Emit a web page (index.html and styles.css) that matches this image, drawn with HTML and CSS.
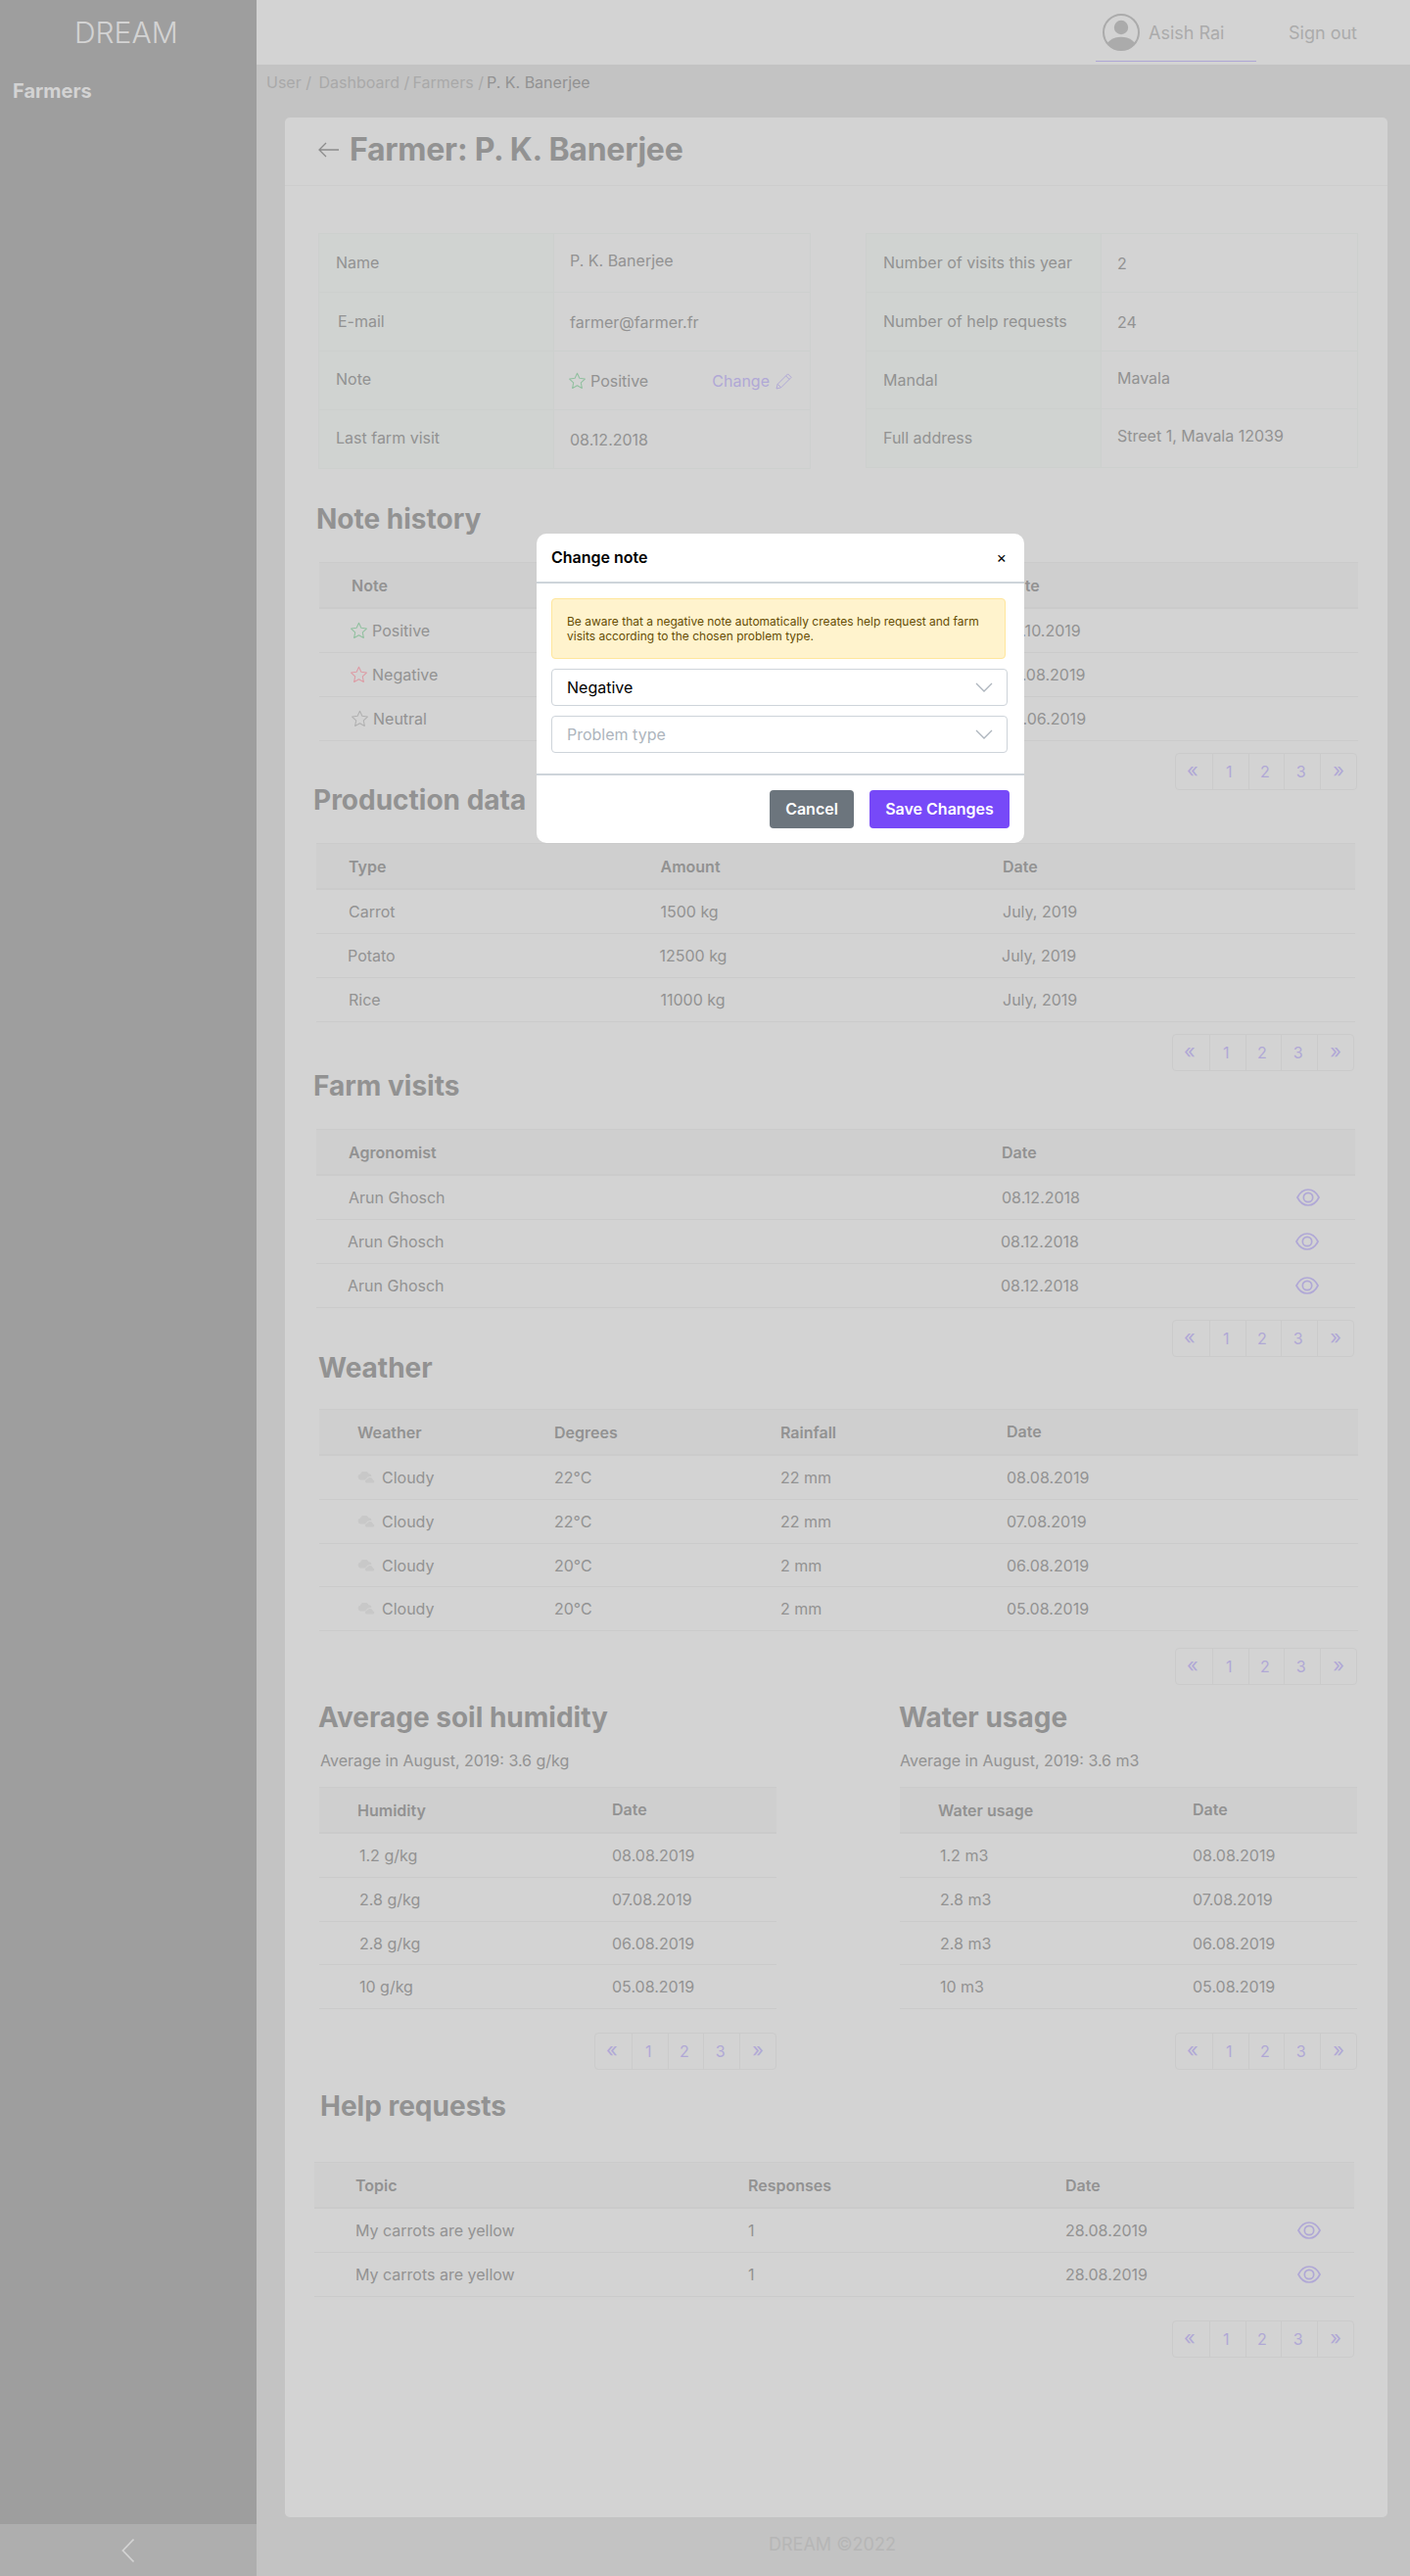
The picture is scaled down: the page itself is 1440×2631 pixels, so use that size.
FILE: index.html
```html
<!DOCTYPE html>
<html lang="en">
<head>
<meta charset="utf-8">
<title>DREAM - Farmer</title>
<link rel="stylesheet" href="styles.css">
</head>
<body>
<svg class="defs" width="0" height="0">
  <symbol id="star" viewBox="0 0 16 16"><path d="M8 .8l2.200 4.700 5.200.7-3.800 3.600.95 5.200L8 12.500 3.450 15l.95-5.200L.6 6.200l5.200-.7z" fill="none" stroke="currentColor" stroke-linejoin="round"/></symbol>
  <symbol id="eye" viewBox="0 0 24 18"><path d="M1 9C3.600 3.900 7.400 1 12 1s8.400 2.900 11 8c-2.600 5.100-6.400 8-11 8S3.600 14.100 1 9z" fill="none" stroke="currentColor" stroke-width="1.700"/><circle cx="12" cy="9" r="4.700" fill="none" stroke="currentColor" stroke-width="1.700"/></symbol>
  <symbol id="cloud" viewBox="0 0 18 12"><path d="M3.300 8.500a3.100 3.100 0 0 1-.2-6.100A4.600 4.600 0 0 1 11.600 2.300 2.900 2.900 0 0 1 14.400 5.200C12 4.700 10 5.600 9.300 7.400 8.500 7.500 8 7.900 7.600 8.500z"/><path d="M9.500 11.500a1.700 1.700 0 0 1 .3-3.400 3.300 3.300 0 0 1 6.200.4 1.550 1.550 0 0 1 .2 3z"/></symbol>
  <symbol id="down" viewBox="0 0 18 10"><path d="M1 1l8 8 8-8" fill="none" stroke="currentColor" stroke-width="1.300"/></symbol>
</svg>
<div class="app">
  <aside class="sidebar">
    <div class="brand">DREAM</div>
    <a class="side-link">Farmers</a>
    <div class="collapse"><svg width="14" height="26" viewBox="0 0 14 26"><path d="M12.500 1.500L1.500 13l11 11.500" fill="none" stroke="currentColor" stroke-width="1.800"/></svg></div>
  </aside>
  <div class="main">
    <header class="topbar">
      <div class="user">
        <svg width="38" height="38" viewBox="0 0 38 38"><defs><clipPath id="disc"><circle cx="19" cy="19" r="18"/></clipPath></defs><circle cx="19" cy="19" r="18" fill="none" stroke="#ababab" stroke-width="2"/><g clip-path="url(#disc)" fill="#ababab"><circle cx="19" cy="14" r="7.200"/><ellipse cx="19" cy="35" rx="15.500" ry="11.300"/></g></svg>
        <span>Asish Rai</span>
      </div>
      <a class="signout">Sign out</a>
    </header>
    <nav class="crumbs"><span class="c1">User /</span><span class="c2">Dashboard /</span><span class="c3">Farmers /</span><span class="here">P. K. Banerjee</span></nav>
    <main class="card">
      <div class="title">
        <svg width="21" height="16" viewBox="0 0 21 16"><path d="M21 8H1M8 1L1 8l7 7" fill="none" stroke="currentColor" stroke-width="1.300"/></svg>
        <h1>Farmer: P. K. Banerjee</h1>
      </div>
      <div class="content">
        <div class="infos">
          <div class="info">
            <div class="k">Name</div><div class="v up">P. K. Banerjee</div>
            <div class="k in">E-mail</div><div class="v down">farmer@farmer.fr</div>
            <div class="k up">Note</div><div class="v down"><svg class="star good"><use href="#star"/></svg>Positive<a class="change">Change <svg width="17" height="17" viewBox="0 0 17 17"><path d="M1 16l1.200-4.700L12.600.9l3.500 3.500L5.700 14.800zM10.600 2.900l3.500 3.500M2.200 11.300l3.500 3.500" fill="none" stroke="currentColor" stroke-linejoin="round"/></svg></a></div>
            <div class="k up">Last farm visit</div><div class="v down">08.12.2018</div>
          </div>
          <div class="info second">
            <div class="k">Number of visits this year</div><div class="v down">2</div>
            <div class="k">Number of help requests</div><div class="v down">24</div>
            <div class="k">Mandal</div><div class="v up">Mavala</div>
            <div class="k">Full address</div><div class="v up">Street 1, Mavala 12039</div>
          </div>
        </div>

        <section class="s-note">
          <h2>Note history</h2>
          <div class="table">
            <div class="row head"><span>Note</span><span class="d2">Date</span></div>
            <div class="row"><span><svg class="star good"><use href="#star"/></svg>Positive</span><span>05.10.2019</span></div>
            <div class="row"><span><svg class="star bad"><use href="#star"/></svg>Negative</span><span>08.08.2019</span></div>
            <div class="row"><span class="r1"><svg class="star"><use href="#star"/></svg>Neutral</span><span class="r1">06.06.2019</span></div>
          </div>
          <div class="pager"><a>«</a><a>1</a><a>2</a><a>3</a><a>»</a></div>
        </section>

        <section class="s-prod">
          <h2>Production data</h2>
          <div class="table">
            <div class="row head"><span>Type</span><span>Amount</span><span>Date</span></div>
            <div class="row"><span>Carrot</span><span>1500 kg</span><span>July, 2019</span></div>
            <div class="row"><span>Potato</span><span>12500 kg</span><span>July, 2019</span></div>
            <div class="row"><span>Rice</span><span>11000 kg</span><span>July, 2019</span></div>
          </div>
          <div class="pager"><a>«</a><a>1</a><a>2</a><a>3</a><a>»</a></div>
        </section>

        <section class="s-farm">
          <h2>Farm visits</h2>
          <div class="table">
            <div class="row head"><span>Agronomist</span><span>Date</span></div>
            <div class="row"><span>Arun Ghosch</span><span>08.12.2018</span><svg class="eye"><use href="#eye"/></svg></div>
            <div class="row"><span>Arun Ghosch</span><span>08.12.2018</span><svg class="eye"><use href="#eye"/></svg></div>
            <div class="row"><span>Arun Ghosch</span><span>08.12.2018</span><svg class="eye"><use href="#eye"/></svg></div>
          </div>
          <div class="pager"><a>«</a><a>1</a><a>2</a><a>3</a><a>»</a></div>
        </section>

        <section class="s-weather">
          <h2>Weather</h2>
          <div class="table">
            <div class="row head"><span>Weather</span><span>Degrees</span><span>Rainfall</span><span class="rise">Date</span></div>
            <div class="row"><span><svg class="cloud"><use href="#cloud"/></svg>Cloudy</span><span>22°C</span><span>22 mm</span><span>08.08.2019</span></div>
            <div class="row"><span><svg class="cloud"><use href="#cloud"/></svg>Cloudy</span><span>22°C</span><span>22 mm</span><span>07.08.2019</span></div>
            <div class="row short"><span><svg class="cloud"><use href="#cloud"/></svg>Cloudy</span><span>20°C</span><span>2 mm</span><span>06.08.2019</span></div>
            <div class="row"><span><svg class="cloud"><use href="#cloud"/></svg>Cloudy</span><span>20°C</span><span>2 mm</span><span>05.08.2019</span></div>
          </div>
          <div class="pager"><a>«</a><a>1</a><a>2</a><a>3</a><a>»</a></div>
        </section>

        <div class="pair">
          <section class="s-half">
            <h2>Average soil humidity</h2>
            <p class="avg in">Average in August, 2019: 3.6 g/kg</p>
            <div class="table">
              <div class="row head"><span>Humidity</span><span class="rise">Date</span></div>
              <div class="row"><span>1.2 g/kg</span><span>08.08.2019</span></div>
              <div class="row"><span>2.8 g/kg</span><span>07.08.2019</span></div>
              <div class="row short"><span>2.8 g/kg</span><span>06.08.2019</span></div>
              <div class="row"><span>10 g/kg</span><span>05.08.2019</span></div>
            </div>
            <div class="pager"><a>«</a><a>1</a><a>2</a><a>3</a><a>»</a></div>
          </section>
          <section class="s-half">
            <h2>Water usage</h2>
            <p class="avg">Average in August, 2019: 3.6 m3</p>
            <div class="table">
              <div class="row head"><span>Water usage</span><span class="rise">Date</span></div>
              <div class="row"><span>1.2 m3</span><span>08.08.2019</span></div>
              <div class="row"><span>2.8 m3</span><span>07.08.2019</span></div>
              <div class="row short"><span>2.8 m3</span><span>06.08.2019</span></div>
              <div class="row"><span>10 m3</span><span>05.08.2019</span></div>
            </div>
            <div class="pager"><a>«</a><a>1</a><a>2</a><a>3</a><a>»</a></div>
          </section>
        </div>

        <section class="s-help">
          <h2>Help requests</h2>
          <div class="table">
            <div class="row head"><span>Topic</span><span>Responses</span><span>Date</span></div>
            <div class="row"><span>My carrots are yellow</span><span>1</span><span>28.08.2019</span><svg class="eye"><use href="#eye"/></svg></div>
            <div class="row"><span>My carrots are yellow</span><span>1</span><span>28.08.2019</span><svg class="eye"><use href="#eye"/></svg></div>
          </div>
          <div class="pager"><a>«</a><a>1</a><a>2</a><a>3</a><a>»</a></div>
        </section>
      </div>
    </main>
    <footer class="foot">DREAM ©2022</footer>
  </div>
</div>

<div class="modal" role="dialog">
  <div class="modal-head"><span>Change note</span><span class="close">×</span></div>
  <div class="modal-body">
    <div class="alert">Be aware that a negative note automatically creates help request and farm visits according to the chosen problem type.</div>
    <div class="select">Negative<svg width="18" height="10"><use href="#down"/></svg></div>
    <div class="select empty">Problem type<svg width="18" height="10"><use href="#down"/></svg></div>
  </div>
  <div class="modal-foot"><button class="btn cancel">Cancel</button><button class="btn save">Save Changes</button></div>
</div>
</body>
</html>
```
FILE: styles.css
```css
* { box-sizing: border-box; }
body {
  margin: 0;
  position: relative;
  font: 16px/20px Inter, "Liberation Sans", sans-serif;
  color: #929292;
  background: #c3c3c3;
}
h1, h2, p { margin: 0; }
.defs { position: absolute; }
.app { display: flex; height: 2631px; }

.sidebar {
  width: 262px;
  flex: none;
  display: flex;
  flex-direction: column;
  background: #9e9e9e;
  color: #d3d3d3;
}
.brand { height: 66px; line-height: 67px; padding-left: 76px; font-size: 30px; font-weight: 300; }
.side-link { padding: 15px 0 0 13px; font-size: 20px; line-height: 24px; font-weight: 700; }
.collapse {
  height: 53px;
  margin-top: auto;
  display: flex;
  align-items: center;
  justify-content: center;
  background: #aeaeae;
}

.main { flex: 1; display: flex; flex-direction: column; min-width: 0; }
.topbar { height: 66px; display: flex; padding-left: 857px; background: #d3d3d3; color: #ababab; font-size: 18px; }
.user {
  width: 164px;
  height: 63px;
  padding: 4px 0 0 7px;
  display: flex;
  align-items: center;
  gap: 9px;
  border-bottom: 1px solid #aea6d6;
}
.user span { padding-top: 1px; }
.signout { padding-left: 33px; line-height: 68px; }
.crumbs { height: 54px; display: flex; padding: 8px 0 0 10px; color: #a9a9a9; white-space: nowrap; }
.c1 { width: 53.500px; }
.c2 { width: 96px; }
.c3 { width: 75.500px; }
.here { color: #929292; }

.card { width: 1126px; height: 2451px; margin-left: 29px; border-radius: 5px; background: #d3d3d3; }
.title { height: 70px; padding: 0 0 4px 34px; display: flex; align-items: center; gap: 9px; border-bottom: 1px solid #cdcdcd; }
.title svg { color: #8c8c8c; }
h1 { font-size: 32px; line-height: 40px; font-weight: 700; letter-spacing: -.25px; padding-left: 2px; }
h2 { font-size: 28px; line-height: 34px; font-weight: 700; }
.content { padding: 48px 0 0 34px; }

.infos { display: flex; gap: 56px; align-items: flex-start; }
.info {
  width: 503px;
  display: grid;
  grid-template-columns: 240px 1fr;
  grid-template-rows: 60px 60px 60px 60px;
  border: 1px solid #cdd0ce;
  border-bottom: 0;
}
.info.second { grid-template-rows: 60px 60px 59px 60px; }
.k, .v { display: flex; align-items: center; border-bottom: 1px solid #cdd0ce; }
.k { padding-left: 17px; padding-bottom: 1px; background: #d0d3d1; border-right: 1px solid #cdd0ce; }
.k.in { padding-left: 19px; }
.v { padding-left: 16px; }
.up { padding-bottom: 5px; }
.k.up { padding-bottom: 3px; }
.down { padding-top: 1px; }
.change { margin: 0 18px 0 auto; display: flex; align-items: center; gap: 6px; color: #b0a8d6; }
.star { width: 17px; height: 18px; margin: 0 5px 0 -1px; flex: none; color: #b1b1b1; }
.star.good { color: #92c0a0; }
.star.bad { color: #dd9ca5; }

.table { border-top: 1px solid #cbcbcb; }
.row {
  display: grid;
  align-items: center;
  height: 45px;
  border-bottom: 1px solid #cbcbcb;
}
.row.short { height: 44px; }
.row.head { height: 47px; border-bottom-width: 2px; background: #cfcfcf; font-weight: 600; }
.row span { display: flex; align-items: center; white-space: nowrap; }
.row .r1 { padding-left: 1px; }
.row .d2 { padding-left: 2px; }
.rise { padding-bottom: 2px; }
.eye { width: 24px; height: 18px; color: #b0a8d6; }
.cloud { width: 18px; height: 12px; margin-right: 7px; fill: #c8c8c8; }

.pager {
  width: 186px;
  height: 38px;
  margin-left: auto;
  display: grid;
  grid-template-columns: repeat(5, 1fr);
  border: 1px solid #cbcbcb;
  border-radius: 4px;
  color: #b0a8d6;
}
.pager a { display: flex; align-items: center; justify-content: center; padding: 0 3px 0 0; }
.pager a:first-child, .pager a:last-child { font-size: 20px; padding-bottom: 3px; }
.pager a:last-child { padding-right: 0; }
.pager a + a { border-left: 1px solid #cbcbcb; }

.s-note { width: 1061px; margin: 34px 0 0 1px; }
.s-note h2 { margin: 0 0 27px -3px; }
.s-note .row { grid-template-columns: 665px 1fr; padding-left: 33px; }
.s-note .pager { margin-top: 12px; margin-right: 1px; }

.s-prod, .s-farm { width: 1061px; margin: -7px 0 0 -2px; }
.s-prod h2, .s-farm h2 { margin: 0 0 27px -3px; }
.s-prod .row { grid-template-columns: 318.500px 349.500px 1fr; padding-left: 33px; }
.s-prod .pager, .s-farm .pager { margin-top: 12px; margin-right: 1px; }
.s-farm { margin-top: -2px; }
.s-farm .row { grid-template-columns: 667px 301px 1fr; padding-left: 33px; }
.s-prod .row:nth-child(3), .s-farm .row:nth-child(n+3) { padding-left: 32px; }

.s-weather { width: 1061px; margin: -6px 0 0 1px; }
.s-weather h2 { margin: 0 0 25px -1px; }
.s-weather .row { grid-template-columns: 201px 231px 231px 1fr; padding-left: 39px; }
.s-weather .pager { margin-top: 17px; margin-right: 1px; }

.pair { display: flex; gap: 126px; padding: 16px 0 0 1px; }
.s-half { width: 467px; }
.s-half h2 { margin-left: -1px; }
.s-half .avg { margin: 17px 0; }
.s-half .avg.in { padding-left: 1px; }
.s-half .row { grid-template-columns: 260px 1fr; padding-left: 39px; }
.s-half .row:not(.head) { grid-template-columns: 258px 1fr; padding-left: 41px; }
.s-half .pager { margin-top: 24px; }

.s-help { width: 1062px; margin: 20px 0 0 -4px; }
.s-help h2 { margin: 0 0 40px 6px; }
.s-help .row { grid-template-columns: 401px 324px 237px 1fr; padding-left: 42px; }
.s-help .pager { margin-top: 24px; }

.foot { padding: 15px 0 0 523px; font-size: 18px; line-height: 25px; color: #b6b6b6; }

/* The dialog floats above the page. */
.modal {
  position: absolute;
  left: 548px;
  top: 545px;
  width: 498px;
  height: 316px;
  display: flex;
  flex-direction: column;
  border-radius: 10px;
  background: #fff;
  color: #000;
}
.modal-head {
  height: 51px;
  padding: 0 18px 2px 15px;
  display: flex;
  align-items: center;
  justify-content: space-between;
  border-bottom: 2px solid #ced4da;
  font-weight: 600;
}
.close { font-weight: 400; }
.modal-body { flex: 1; padding: 15px 17px 0 15px; }
.alert {
  width: 464px;
  height: 62px;
  padding: 15px 12px 0 15px;
  border: 1px solid #ffe69c;
  border-radius: 4px;
  background: #fff3cd;
  color: #664d03;
  font-size: 12px;
  line-height: 15px;
}
.select {
  height: 38px;
  margin-top: 10px;
  padding: 0 14px 0 15px;
  display: flex;
  align-items: center;
  justify-content: space-between;
  border: 1px solid #ced4da;
  border-radius: 4px;
}
.select svg { color: #adb5bd; }
.select.empty { color: #adb5bd; }
.modal-foot {
  height: 71px;
  padding: 15px 15px 0 0;
  display: flex;
  justify-content: flex-end;
  gap: 16px;
  border-top: 2px solid #ced4da;
}
.btn {
  height: 39px;
  padding: 0 0 2px;
  border: 0;
  border-radius: 4px;
  font: 600 16px/20px Inter, "Liberation Sans", sans-serif;
  color: #fff;
}
.cancel { width: 86px; background: #6c757d; }
.save { width: 143px; background: #7749f8; }
```
